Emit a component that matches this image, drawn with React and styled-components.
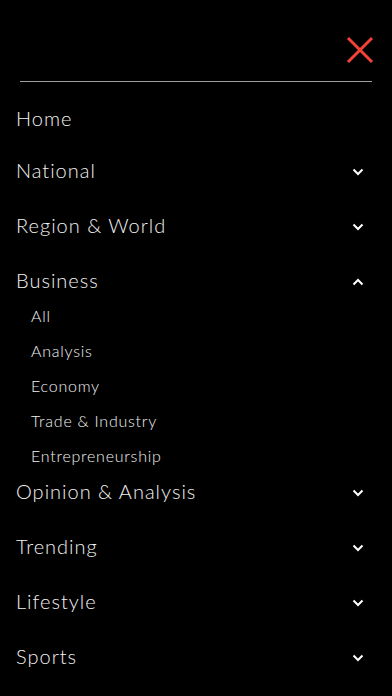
import React, { useState } from "react";
import styled, { createGlobalStyle } from "styled-components";

const GlobalStyle = createGlobalStyle`
  html, body {
    margin: 0;
    padding: 0;
    background: #000;
  }
  body {
    font-family: "Lato", "Liberation Sans", sans-serif;
  }
`;

// Menu container
const Menu = styled.nav`
  width: 392px;
  min-height: 696px;
  background: #000;
  color: #f2f2f2;
  overflow: hidden;
`;

const Header = styled.header`
  height: 81px;
  box-sizing: border-box;
  padding: 36px 18px 0 0;
  display: flex;
  justify-content: flex-end;
  align-items: flex-start;
`;

const CloseButton = styled.button`
  width: 28px;
  height: 28px;
  padding: 0;
  border: none;
  background: transparent;
  cursor: pointer;
  display: flex;
`;

const Divider = styled.div`
  height: 1px;
  margin: 0 20px;
  background: #a0a0a0;
`;

const List = styled.ul`
  list-style: none;
  margin: 0;
  padding: 18px 0 0;
`;

const Item = styled.li`
  margin-bottom: ${(p) => (p.$open ? "0" : p.$gap || "19px")};
`;

const Row = styled.div`
  height: 36px;
  display: flex;
  align-items: center;
  justify-content: space-between;
  padding: 0 28px 0 16px;
  font-size: 20px;
  font-weight: 300;
  letter-spacing: 1px;
  cursor: pointer;

  svg {
    margin-top: 3px;
  }
`;

const SubList = styled.ul`
  list-style: none;
  margin: 0;
  padding: 0;
`;

const SubItem = styled.li`
  height: 35px;
  display: flex;
  align-items: center;
  padding-left: 31px;
  font-size: 16px;
  font-weight: 300;
  letter-spacing: 0.75px;
`;

const Chevron = ({ up }) => (
  <svg width="12" height="8" viewBox="0 0 12 8">
    <path
      d={up ? "M1.5 6.5 L6 2 L10.5 6.5" : "M1.5 1.5 L6 6 L10.5 1.5"}
      fill="none"
      stroke="#fff"
      strokeWidth="2"
    />
  </svg>
);

const sections = [
  { name: "Home", gap: "16px" },
  { name: "National", sub: [] },
  { name: "Region & World", sub: [] },
  {
    name: "Business",
    sub: ["All", "Analysis", "Economy", "Trade & Industry", "Entrepreneurship"],
  },
  { name: "Opinion & Analysis", sub: [] },
  { name: "Trending", sub: [] },
  { name: "Lifestyle", sub: [] },
  { name: "Sports", sub: [] },
];

export default function App() {
  const [open, setOpen] = useState("Business");

  return (
    <>
      <GlobalStyle />
      <Menu>
        <Header>
          <CloseButton aria-label="Close">
            <svg width="28" height="28" viewBox="0 0 28 28">
              <path
                d="M2 2 L26 26 M26 2 L2 26"
                stroke="#f44336"
                strokeWidth="3"
                fill="none"
              />
            </svg>
          </CloseButton>
        </Header>
        <Divider />
        <List>
          {sections.map((s) => {
            const isOpen = open === s.name;
            return (
              <Item key={s.name} $open={isOpen} $gap={s.gap}>
                <Row onClick={() => s.sub && setOpen(isOpen ? null : s.name)}>
                  <span>{s.name}</span>
                  {s.sub && <Chevron up={isOpen} />}
                </Row>
                {isOpen && (
                  <SubList>
                    {s.sub.map((c) => (
                      <SubItem key={c}>{c}</SubItem>
                    ))}
                  </SubList>
                )}
              </Item>
            );
          })}
        </List>
      </Menu>
    </>
  );
}
